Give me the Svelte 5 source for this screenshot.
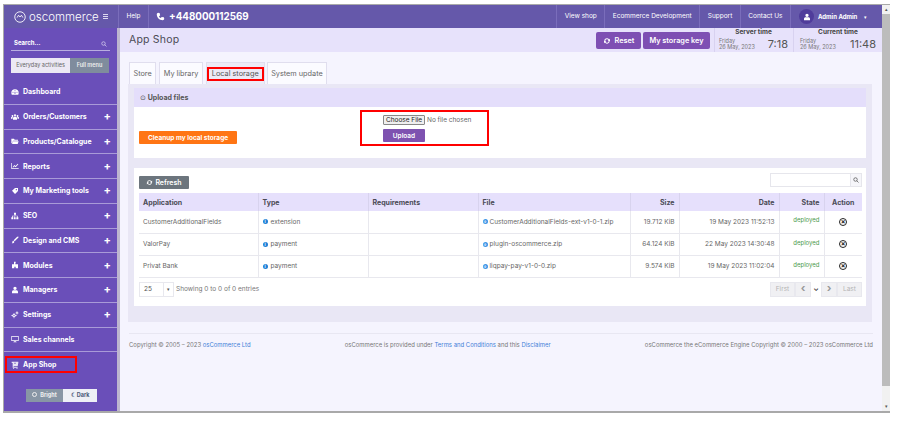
<script>
  const icons = {
    gauge: "M12 4a11 11 0 0 1 11 11c0 2-.5 4-1.500 5h-19C1.500 19 1 17 1 15A11 11 0 0 1 12 4zM12 13a2 2 0 1 0 .01 0zM6 11a1.500 1.500 0 1 0 .01 0zM18 11a1.500 1.500 0 1 0 .01 0zM12 7a1.500 1.500 0 1 0 .01 0z",
    users: "M12 4a3 3 0 1 1-.01 0zM4.500 6a2.500 2.500 0 1 1-.01 0zM19.500 6a2.500 2.500 0 1 1-.01 0zM6 20v-4c0-3 2-5 4-5h4c2 0 4 2 4 5v4zM0 17v-3c0-2 1-3 3-3h3c-1 1-1.500 3-1.500 6zM24 17v-3c0-2-1-3-3-3h-3c1 1 1.500 3 1.500 6z",
    folder: "M1 5h8l2 3h10v3H6l-3 8H1zm5 8h17l-3 8H3z",
    chart: "M1 3h2v16h20v2H1zm4 12 5-6 4 3 6-7 2 2-8 9-4-3-4 4z",
    tag: "M3 11 12 3h9v9l-9 9zm13-5a2 2 0 1 0 0 4 2 2 0 0 0 0-4z",
    sitemap: "M9 2h6v6h-2v3h7v5h2v6h-6v-6h2v-3h-6v3h2v6H9v-6h2v-3H5v3h2v6H1v-6h2v-5h8V8H9z",
    brush: "M22 2c1 1 0 3-2 5L11 16l-3-3 9-9c2-2 4-3 5-2zM7 14l3 3c0 3-3 5-8 5 2-1 2-3 2-4 0-2 1-4 3-4z",
    modules: "M9 2h5v5h-1v3h8v12h-7v-5h-4v5H3V10h6z",
    user: "M12 2a5 5 0 1 1 0 10 5 5 0 0 1 0-10zM3 22v-4c0-3 2-5 5-5h8c3 0 5 2 5 5v4z",
    cogs: "M9 9a5 5 0 1 0 .01 0zM9 12a2 2 0 1 0 .01 0zM8 6h2v3H8zM8 19h2v3H8zM1 13h3v2H1zM14 13h3v2h-3zM18 3a3 3 0 1 0 .01 0zM18 5a1 1 0 1 0 .01 0zM17 1h2v2h-2zM17 9h2v2h-2zM13 5h2v2h-2zM21 5h2v2h-2z",
    monitor: "M1 3h22v15h-9v2h3v2H7v-2h3v-2H1zm2 2v11h18V5z",
    cart: "M2 2h20v3l-2 11H8v2h12v2H5V6H2zM9 5v3h2V5zM13 5v3h2V5zM8 21a1.500 1.500 0 1 0 .01 0zM18 21a1.500 1.500 0 1 0 .01 0z",
    refresh: "M12 4a8 8 0 0 1 6.500 3.300L21 5v7h-7l2.500-2.500A5 5 0 0 0 7 12H4a8 8 0 0 1 8-8zm8 8a8 8 0 0 1-14.500 4.700L3 19v-7h7l-2.500 2.500A5 5 0 0 0 17 12z",
    phone: "M6 2l4 1 1 6-3 2c1 3 2 4 5 5l2-3 6 1 1 4c0 2-2 4-4 4C9 22 2 14 2 6c0-2 2-4 4-4z"
  };

  const menu = [
    { label: "Dashboard", icon: "gauge" },
    { label: "Orders/Customers", icon: "users", plus: true },
    { label: "Products/Catalogue", icon: "folder", plus: true },
    { label: "Reports", icon: "chart", plus: true },
    { label: "My Marketing tools", icon: "tag", plus: true },
    { label: "SEO", icon: "sitemap", plus: true },
    { label: "Design and CMS", icon: "brush", plus: true },
    { label: "Modules", icon: "modules", plus: true },
    { label: "Managers", icon: "user", plus: true },
    { label: "Settings", icon: "cogs", plus: true },
    { label: "Sales channels", icon: "monitor" },
    { label: "App Shop", icon: "cart", active: true }
  ];

  const tabs = ["Store", "My library", "Local storage", "System update"];
  const topLinks = ["View shop", "Ecommerce Development", "Support", "Contact Us"];

  const rows = [
    { app: "CustomerAdditionalFields", type: "extension", file: "CustomerAdditionalFields-ext-v1-0-1.zip", size: "19.712 KiB", date: "19 May 2023 11:52:13" },
    { app: "ValorPay", type: "payment", file: "plugin-oscommerce.zip", size: "64.124 KiB", date: "22 May 2023 14:30:48" },
    { app: "Privat Bank", type: "payment", file: "liqpay-pay-v1-0-0.zip", size: "9.574 KiB", date: "19 May 2023 11:02:04" }
  ];
</script>

<div class="shot">
  <div class="frame">
    <div class="main-col">
      <header class="topbar">
        <div class="brand">
          <svg class="logo" viewBox="0 0 24 24" fill="none" stroke="#fff" stroke-width="1.500">
            <circle cx="12" cy="12" r="9" />
            <path d="M7 13l2.500-4 2.500 3 2.500-3 2.500 4" />
          </svg>
          <span class="brand-name">oscommerce</span>
          <span class="burger"><i></i><i></i><i></i></span>
        </div>
        <a class="help">Help</a>
        <div class="phone">
          <svg viewBox="0 0 24 24" fill="#fff"><path d={icons.phone} /></svg>
          +448000112569
        </div>
        <nav class="toplinks">
          {#each topLinks as link}
            <a>{link}</a>
          {/each}
        </nav>
        <div class="account">
          <span class="avatar">
            <svg viewBox="0 0 24 24" fill="#fff"><path d={icons.user} /></svg>
          </span>
          <b>Admin Admin</b>
          <span class="caret">▾</span>
        </div>
      </header>

      <div class="body">
        <aside class="sidebar">
          <div class="search"><span>Search...</span>
            <svg viewBox="0 0 24 24" fill="none" stroke="#e8e4f8" stroke-width="2.500"><circle cx="10" cy="10" r="7" /><path d="M15 15l7 7" /></svg>
          </div>
          <div class="menu-switch">
            <span class="everyday">Everyday activities</span>
            <span class="full">Full menu</span>
          </div>
          <ul class="menu">
            {#each menu as item}
              <li class:active={item.active}>
                <span class="item" class:flagged={item.active}>
                  <svg viewBox="0 0 24 24" fill="#fff"><path d={icons[item.icon]} fill-rule="evenodd" /></svg>
                  {item.label}
                </span>
                {#if item.plus}<span class="plus">+</span>{/if}
              </li>
            {/each}
          </ul>
          <div class="theme">
            <span class="bright"><i class="sun"></i>Bright</span>
            <span class="dark">☾ Dark</span>
          </div>
        </aside>

        <main class="content">
          <div class="page-head">
            <h1>App Shop</h1>
            <div class="head-actions">
              <button class="purple">
                <svg viewBox="0 0 24 24" fill="#fff"><path d={icons.refresh} /></svg>
                Reset
              </button>
              <button class="purple">My storage key</button>
            </div>
            <div class="clock server">
              <strong>Server time</strong>
              <div class="clock-row"><span>Friday<br />26 May, 2023</span><em>7:18</em></div>
            </div>
            <div class="clock current">
              <strong>Current time</strong>
              <div class="clock-row"><span>Friday<br />26 May, 2023</span><em>11:48</em></div>
            </div>
          </div>

          <div class="tabs">
            {#each tabs as tab}
              <span class="tab" class:current={tab === "Local storage"}>
                <span class:flagged={tab === "Local storage"}>{tab}</span>
              </span>
            {/each}
          </div>

          <section class="tab-panel">
            <div class="upload-card">
              <div class="card-title"><span class="ring">⊙</span> Upload files</div>
              <div class="upload-body">
                <button class="orange">Cleanup my local storage</button>
                <div class="upload-box">
                  <input class="file" type="file" />
                  <button class="upload">Upload</button>
                </div>
              </div>
            </div>

            <div class="list-card">
              <div class="list-tools">
                <button class="refresh">
                  <svg viewBox="0 0 24 24" fill="#fff"><path d={icons.refresh} /></svg>
                  Refresh
                </button>
                <div class="table-search">
                  <span class="search-field"></span>
                  <span class="search-btn">
                    <svg viewBox="0 0 24 24" fill="none" stroke="#555" stroke-width="3"><circle cx="10" cy="10" r="7" /><path d="M15 15l7 7" /></svg>
                  </span>
                </div>
              </div>

              <table>
                <colgroup>
                  <col style="width:119px" /><col style="width:110px" /><col style="width:110px" />
                  <col style="width:152px" /><col style="width:49px" /><col style="width:100px" />
                  <col style="width:45px" /><col style="width:38px" />
                </colgroup>
                <thead>
                  <tr>
                    <th>Application</th><th>Type</th><th>Requirements</th><th>File</th>
                    <th class="r">Size</th><th class="r">Date</th><th class="r">State</th><th class="c">Action</th>
                  </tr>
                </thead>
                <tbody>
                  {#each rows as row}
                    <tr>
                      <td>{row.app}</td>
                      <td><span class="dot">i</span>{row.type}</td>
                      <td></td>
                      <td><span class="dot file-dot">↓</span>{row.file}</td>
                      <td class="r">{row.size}</td>
                      <td class="r">{row.date}</td>
                      <td class="r state">deployed</td>
                      <td class="c"><span class="remove">×</span></td>
                    </tr>
                  {/each}
                </tbody>
              </table>

              <div class="list-foot">
                <div class="per-page"><span class="num">25</span><span class="arrow">▾</span></div>
                <span class="showing">Showing 0 to 0 of 0 entries</span>
                <div class="pager">
                  <span class="pg">First</span>
                  <span class="pg sq">‹</span>
                  <span class="pg-open">⌄</span>
                  <span class="pg sq">›</span>
                  <span class="pg">Last</span>
                </div>
              </div>
            </div>
          </section>

          <footer>
            <span>Copyright © 2005 – 2023 <a>osCommerce Ltd</a></span>
            <span>osCommerce is provided under <a>Terms and Conditions</a> and this <a>Disclaimer</a></span>
            <span>osCommerce the eCommerce Engine Copyright © 2000 – 2023 osCommerce Ltd</span>
          </footer>
        </main>
      </div>
    </div>

    <div class="scrollbar">
      <span class="up">▴</span>
      <span class="thumb"></span>
      <span class="down">▾</span>
    </div>
  </div>
</div>

<style>
  :global(body) {
    margin: 0;
    background: #fff;
  }
  .shot {
    width: 898px;
    height: 421px;
    padding: 4px 8px 8px 3px;
    box-sizing: border-box;
    font-family: Inter, "Liberation Sans", sans-serif;
    color: #555;
    overflow: hidden;
  }
  .frame {
    height: 100%;
    border: 1px solid #a9a9a9;
    border-width: 1px 0 2px 1px;
    box-sizing: border-box;
    display: flex;
  }
  .main-col {
    flex: 1;
    min-width: 0;
    display: flex;
    flex-direction: column;
  }

  /* top bar */
  .topbar {
    height: 23px;
    flex: none;
    background: #6558aa;
    display: flex;
    align-items: center;
    color: #fff;
    font-size: 6.500px;
  }
  .brand {
    width: 115px;
    height: 100%;
    display: flex;
    align-items: center;
    padding-left: 9px;
    box-sizing: border-box;
    border-right: 1px solid #7a6dbb;
  }
  .logo {
    width: 14px;
    height: 14px;
    margin-right: 2px;
  }
  .brand-name {
    font-size: 11.500px;
    font-weight: 300;
    width: 72px;
  }
  .burger {
    display: flex;
    flex-direction: column;
    gap: 1px;
    width: 5px;
    margin-left: 2px;
  }
  .burger i {
    height: 1px;
    background: #dcd8f0;
  }
  .help {
    width: 30px;
    height: 100%;
    line-height: 23px;
    text-align: center;
    border-right: 1px solid #7a6dbb;
    box-sizing: border-box;
  }
  .phone {
    display: flex;
    align-items: center;
    gap: 4px;
    margin-left: 7px;
    font-size: 9.800px;
    font-weight: 700;
  }
  .phone svg {
    width: 9px;
    height: 9px;
  }
  .toplinks {
    margin-left: auto;
    display: flex;
    height: 100%;
  }
  .toplinks a {
    padding: 0 7.500px;
    line-height: 23px;
    border-left: 1px solid #7a6dbb;
    white-space: nowrap;
  }
  .account {
    width: 92px;
    height: 100%;
    display: flex;
    align-items: center;
    border-left: 1px solid #7a6dbb;
    padding-left: 8px;
    box-sizing: border-box;
    gap: 4px;
    font-size: 6px;
  }
  .avatar {
    width: 15px;
    height: 15px;
    border-radius: 50%;
    background: #4f3c9b;
    display: flex;
    align-items: center;
    justify-content: center;
  }
  .avatar svg {
    width: 8px;
    height: 8px;
  }
  .caret {
    font-size: 5px;
    margin-left: 3px;
  }

  .body {
    flex: 1;
    display: flex;
    min-height: 0;
  }

  /* sidebar */
  .sidebar {
    width: 113px;
    flex: none;
    background: #6a4fb9;
    border-right: 3px solid #bdb6cf;
    color: #fff;
    display: flex;
    flex-direction: column;
  }
  .search {
    margin: 7px 7px 0;
    height: 15px;
    border-bottom: 1px solid #b9aee0;
    display: flex;
    justify-content: space-between;
    align-items: center;
    font-size: 6px;
    font-weight: 700;
    padding: 0 3px;
  }
  .search svg {
    width: 6px;
    height: 6px;
    margin-top: 3px;
  }
  .menu-switch {
    margin: 7px 8px 0 7px;
    height: 15px;
    display: flex;
    font-size: 5.500px;
    line-height: 15px;
    text-align: center;
  }
  .everyday {
    width: 59px;
    background: #ece9f4;
    color: #666;
  }
  .full {
    flex: 1;
    background: #7f8c9d;
    color: #eee;
    font-weight: 600;
  }
  .menu {
    list-style: none;
    margin: 7px 0 0;
    padding: 0;
  }
  .menu li {
    height: 24.760px;
    box-sizing: border-box;
    border-bottom: 1px solid #a99bd8;
    display: flex;
    align-items: center;
    justify-content: space-between;
    padding: 0 0 0 7px;
    font-size: 7px;
    font-weight: 700;
  }
  .menu li.active {
    border-bottom: 0;
    padding-left: 1px;
  }
  .item {
    display: flex;
    align-items: center;
    gap: 4px;
  }
  .item svg {
    width: 8px;
    height: 8px;
    flex: none;
  }
  .item.flagged {
    width: 72px;
    height: 17px;
    border: 2px solid #f00;
    box-sizing: border-box;
    padding-left: 4px;
  }
  .flagged svg {
    opacity: 0.85;
  }
  .plus {
    font-size: 11px;
    font-weight: 700;
    margin-right: 6px;
    line-height: 1;
  }
  .theme {
    margin: 12px 0 0 22px;
    width: 71px;
    height: 13px;
    display: flex;
    font-size: 5.500px;
    font-weight: 700;
    line-height: 13px;
    text-align: center;
  }
  .bright {
    width: 37px;
    background: #8896a5;
    color: #f0f0f0;
  }
  .sun {
    display: inline-block;
    width: 3px;
    height: 3px;
    border: 1px solid #eee;
    border-radius: 50%;
    margin-right: 3px;
  }
  .dark {
    flex: 1;
    background: #eef0f6;
    color: #4a5a78;
  }

  /* content */
  .content {
    flex: 1;
    min-width: 0;
    background: #f5f4fe;
    display: flex;
    flex-direction: column;
  }
  .page-head {
    height: 24px;
    flex: none;
    background: #e7e2fb;
    display: flex;
    align-items: flex-start;
    padding-left: 9px;
    box-sizing: border-box;
  }
  h1 {
    margin: 5px 0 0;
    font-size: 10.500px;
    font-weight: 400;
    color: #4b4b55;
    letter-spacing: 0.2px;
  }
  .head-actions {
    margin-left: auto;
    display: flex;
    gap: 2px;
    padding-top: 4px;
  }
  button {
    font-family: inherit;
    border: 0;
    padding: 0;
    color: #fff;
    display: inline-flex;
    align-items: center;
    justify-content: center;
  }
  .purple {
    height: 17px;
    background: #7e4fb3;
    border-radius: 2px;
    font-size: 7.300px;
    font-weight: 600;
    padding: 0 6.500px;
    gap: 4px;
  }
  .purple svg {
    width: 8px;
    height: 8px;
  }
  .clock {
    height: 24px;
    box-sizing: border-box;
    border-left: 1px solid #d8d2f0;
    font-size: 5.500px;
    color: #777;
  }
  .clock.server {
    width: 79px;
    margin-left: 4px;
    padding: 0 5px 0 4px;
  }
  .clock.current {
    width: 89px;
    padding: 0 6px 0 6px;
  }
  .clock strong {
    display: block;
    text-align: center;
    font-size: 6.500px;
    color: #444;
    font-weight: 700;
    line-height: 8px;
  }
  .clock-row {
    display: flex;
    justify-content: space-between;
    align-items: center;
    line-height: 6.500px;
    padding-top: 1px;
  }
  .clock em {
    font-style: normal;
    font-size: 11px;
    color: #555;
    line-height: 14px;
  }
  .tabs {
    display: flex;
    gap: 3px;
    margin: 10px 0 0 9px;
    height: 22px;
    flex: none;
  }
  .tab {
    height: 100%;
    box-sizing: border-box;
    background: #fbfbff;
    border: 1px solid #e0deee;
    border-bottom: 0;
    padding: 6px 3.500px 0;
    font-size: 7.300px;
    color: #666;
    white-space: nowrap;
  }
  .tab.current {
    background: #eceaf6;
    padding: 4px 0 0;
    margin-right: -1px;
  }
  .tab .flagged {
    display: block;
    padding: 0 3px;
    height: 14px;
    line-height: 10px;
    box-sizing: border-box;
    border: 2px solid #f00;
    color: #555;
  }
  .tab-panel {
    margin: 0 10px 0 8px;
    padding: 4px 6px 7px;
    background: #e9e7f5;
    height: 238px;
    box-sizing: border-box;
    flex: none;
  }
  .upload-card {
    background: #fff;
    height: 70px;
  }
  .card-title {
    height: 19px;
    line-height: 19px;
    background: #e4defb;
    font-size: 7px;
    font-weight: 700;
    padding-left: 6px;
    color: #555;
  }
  .ring {
    font-weight: 400;
  }
  .upload-body {
    height: 51px;
    display: flex;
    padding-left: 5px;
  }
  .orange {
    align-self: flex-start;
    margin-top: 24px;
    width: 98px;
    height: 13px;
    background: #ff7514;
    font-size: 6.500px;
    font-weight: 700;
    border-radius: 1px;
  }
  .upload-box {
    margin: 3px 0 0 123px;
    width: 129px;
    height: 36px;
    box-sizing: border-box;
    border: 2px solid #f00;
    padding: 3px 0 0 21px;
    display: flex;
    flex-direction: column;
    align-items: flex-start;
    gap: 4px;
  }
  .file {
    font-family: inherit;
    font-size: 6.500px;
    color: #666;
    width: 100px;
    height: 10px;
  }
  .file::file-selector-button {
    font-family: inherit;
    font-size: 6.500px;
    width: 42px;
    height: 10px;
    padding: 0;
    margin-right: 2px;
    border: 1px solid #888;
    border-radius: 1px;
    background: #efefef;
    color: #222;
  }
  .upload {
    width: 42px;
    height: 13px;
    background: #7e52b0;
    font-size: 6.500px;
    font-weight: 600;
    border-radius: 1px;
  }
  .list-card {
    margin-top: 10px;
    background: #fff;
    padding: 5px 4px 0 5px;
    height: 138px;
    box-sizing: border-box;
  }
  .list-tools {
    display: flex;
    justify-content: space-between;
    align-items: flex-start;
    height: 20px;
  }
  .refresh {
    margin-top: 3px;
    width: 50px;
    height: 13px;
    background: #6c757d;
    font-size: 7px;
    font-weight: 600;
    gap: 2px;
    border-radius: 1px;
  }
  .refresh svg {
    width: 7px;
    height: 7px;
  }
  .table-search {
    display: flex;
    height: 14px;
    width: 92px;
    box-sizing: border-box;
    border: 1px solid #e6e6ec;
  }
  .search-field {
    flex: 1;
  }
  .search-btn {
    width: 10px;
    border-left: 1px solid #e6e6ec;
    background: #f6f6fa;
    display: flex;
    align-items: center;
    justify-content: center;
  }
  .search-btn svg {
    width: 6px;
    height: 6px;
  }
  table {
    width: 723px;
    table-layout: fixed;
    border-collapse: collapse;
    font-size: 6.500px;
  }
  th {
    height: 18px;
    background: #e6e0fc;
    color: #4a4a55;
    font-size: 7px;
    font-weight: 700;
    text-align: left;
    padding: 0 4px;
    border-right: 1px solid #d8d3ee;
    box-sizing: border-box;
  }
  td {
    height: 22px;
    padding: 0 4px;
    color: #666;
    border-bottom: 1px solid #e8e8ee;
    border-right: 1px solid #e8e8ee;
    box-sizing: border-box;
    white-space: nowrap;
    overflow: hidden;
  }
  th:last-child,
  td:last-child {
    border-right: 0;
  }
  .r {
    text-align: right;
  }
  .c {
    text-align: center;
  }
  .dot {
    display: inline-block;
    width: 5px;
    height: 5px;
    border-radius: 50%;
    background: #1c7fd6;
    color: #fff;
    font-size: 4px;
    line-height: 5px;
    text-align: center;
    margin-right: 3px;
    font-weight: 700;
    vertical-align: 0.5px;
  }
  .file-dot {
    background: #3d95e6;
    margin-right: 2px;
  }
  .state {
    color: #4c9a4c;
    font-size: 6px;
    padding-bottom: 4px;
  }
  .remove {
    display: inline-block;
    width: 6px;
    height: 6px;
    border: 1px solid #222;
    border-radius: 50%;
    line-height: 6px;
    color: #222;
    font-size: 7px;
    font-weight: 700;
    text-align: center;
  }
  .list-foot {
    display: flex;
    align-items: center;
    margin-top: 4px;
    height: 15px;
    font-size: 6.500px;
  }
  .per-page {
    width: 35px;
    height: 15px;
    display: flex;
    box-sizing: border-box;
    border: 1px solid #e8e8ee;
    line-height: 13px;
  }
  .num {
    flex: 1;
    padding-left: 4px;
  }
  .arrow {
    width: 9px;
    border-left: 1px solid #e8e8ee;
    text-align: center;
    font-size: 5px;
  }
  .showing {
    margin-left: 2px;
    color: #777;
  }
  .pager {
    margin-left: auto;
    display: flex;
    height: 15px;
    width: 92px;
    line-height: 15px;
    text-align: center;
    color: #b4b4b4;
    font-size: 6.500px;
  }
  .pg {
    background: #f0f0f3;
    flex: 1;
    border: 1px solid #e8e8ee;
    box-sizing: border-box;
    line-height: 13px;
  }
  .pg.sq {
    flex: none;
    width: 16px;
    font-size: 11px;
    color: #999;
    line-height: 10px;
    font-weight: 700;
  }
  .pg-open {
    width: 10px;
    color: #333;
    font-size: 7px;
    line-height: 13px;
    font-weight: 700;
  }

  footer {
    margin: 11px 9px 0 9px;
    padding-top: 7px;
    border-top: 1px solid #e8e7f2;
    display: flex;
    justify-content: space-between;
    font-size: 5.950px;
    color: #777;
    white-space: nowrap;
  }
  footer a {
    color: #3f7fd8;
  }

  /* scrollbar */
  .scrollbar {
    width: 8px;
    flex: none;
    background: #f1f1f1;
    display: flex;
    flex-direction: column;
    font-size: 5px;
    line-height: 9px;
    text-align: center;
    color: #555;
  }
  .up,
  .down {
    height: 9px;
    flex: none;
  }
  .thumb {
    height: 372px;
    flex: none;
    background: #bcbcbc;
  }
  .down {
    margin-top: auto;
  }
</style>
